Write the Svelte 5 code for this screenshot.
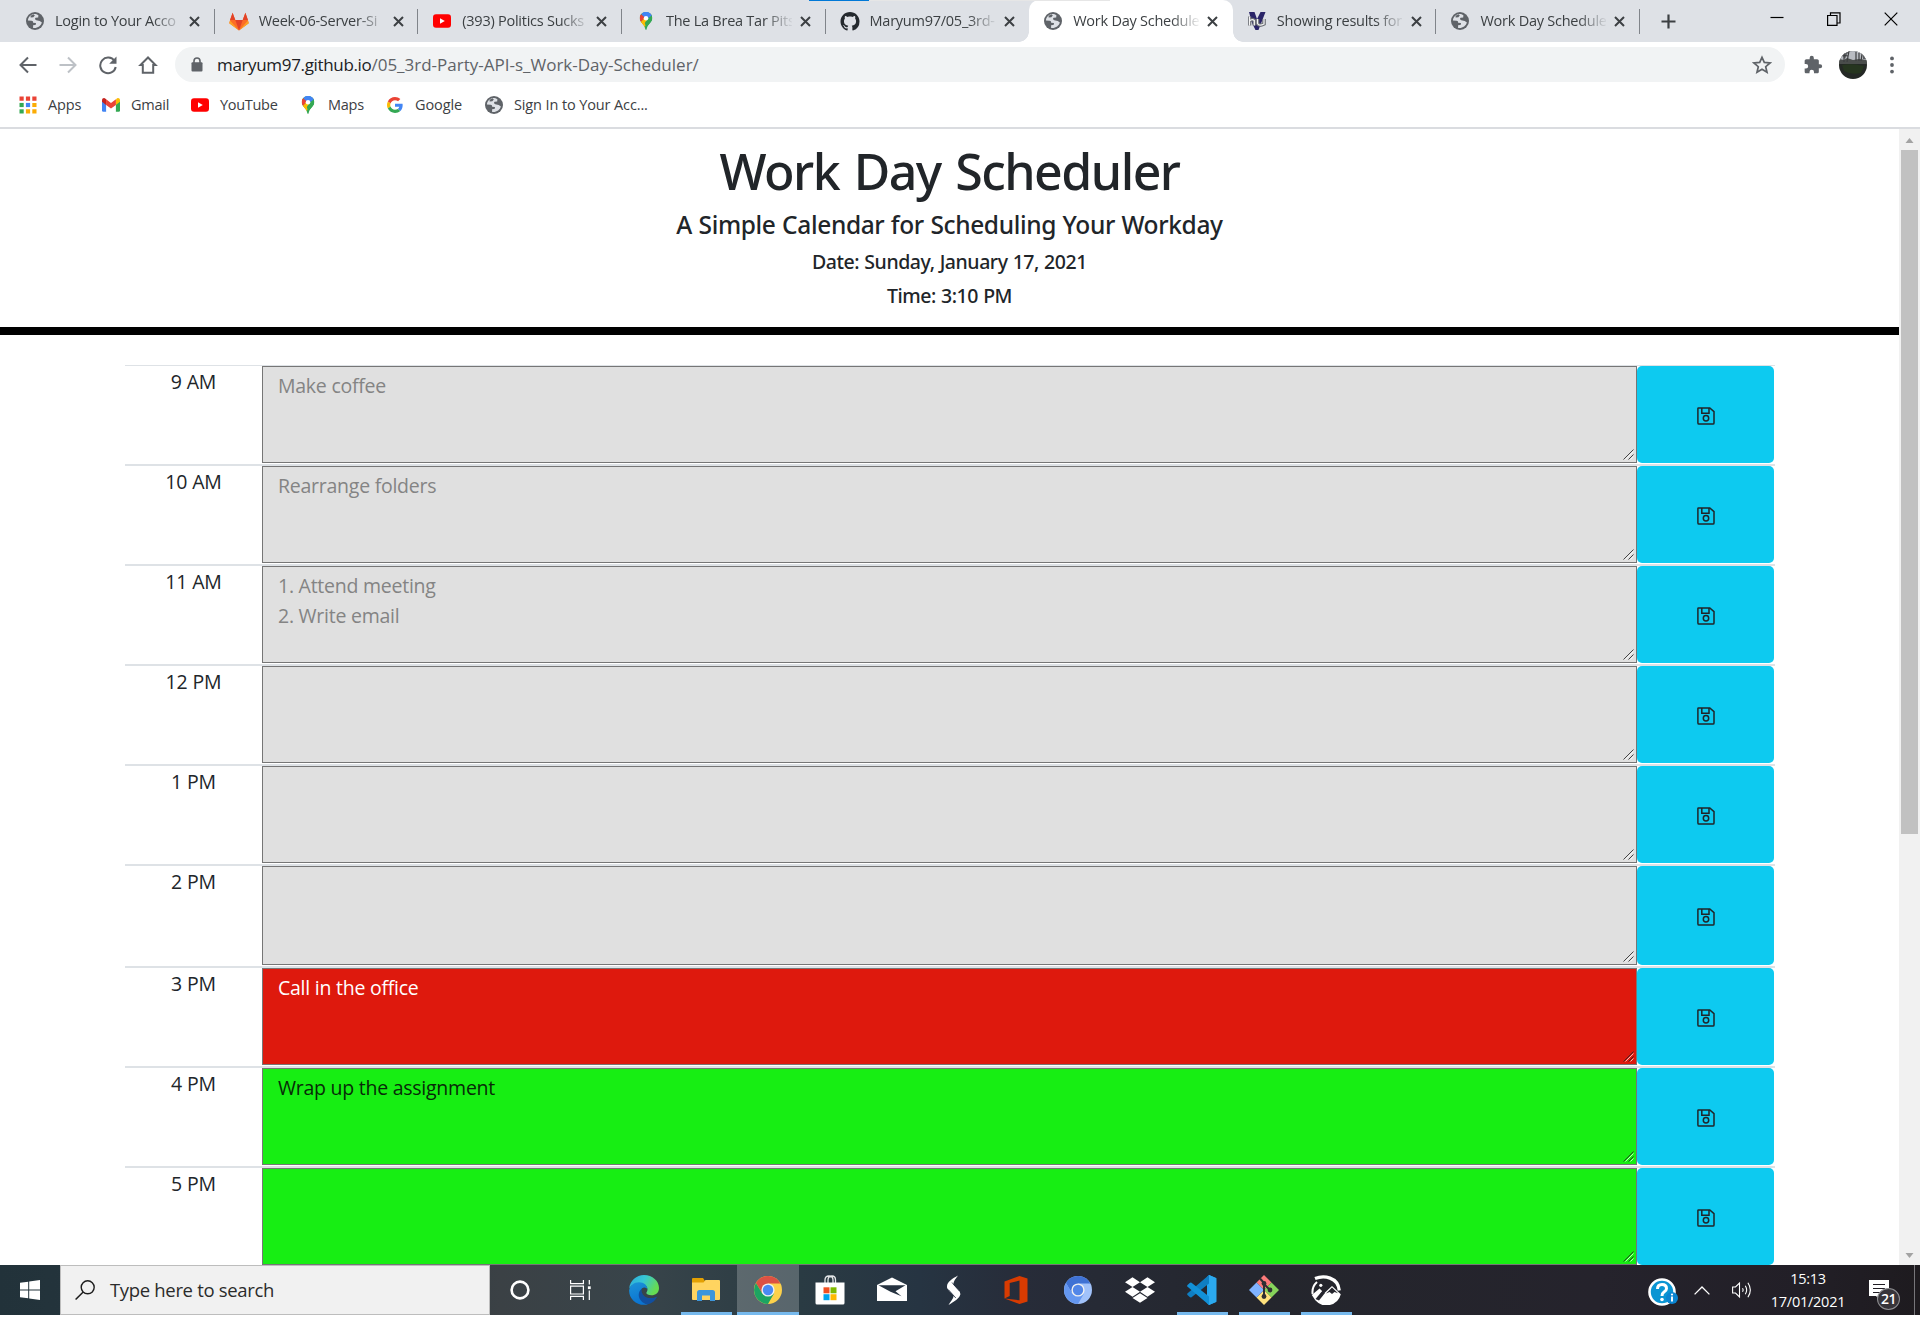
<script>
  const tabs = [
    { icon: 'globe', title: 'Login to Your Acco' },
    { icon: 'gitlab', title: 'Week-06-Server-Si' },
    { icon: 'youtube', title: '(393) Politics Sucks' },
    { icon: 'maps', title: 'The La Brea Tar Pits' },
    { icon: 'github', title: 'Maryum97/05_3rd-' },
    { icon: 'globe', title: 'Work Day Schedule', active: true },
    { icon: 'hv', title: 'Showing results for' },
    { icon: 'globe', title: 'Work Day Schedule' }
  ];

  const bookmarks = [
    { icon: 'apps', label: 'Apps', cls: 'b-apps' },
    { icon: 'gmail', label: 'Gmail', cls: 'b-gmail' },
    { icon: 'youtube', label: 'YouTube', cls: 'b-youtube' },
    { icon: 'maps', label: 'Maps', cls: 'b-maps' },
    { icon: 'google', label: 'Google', cls: 'b-google' },
    { icon: 'globe', label: 'Sign In to Your Acc...', cls: 'b-signin' }
  ];

  const hours = [
    { label: '9 AM', text: 'Make coffee', state: 'past' },
    { label: '10 AM', text: 'Rearrange folders', state: 'past' },
    { label: '11 AM', text: '1. Attend meeting\n2. Write email', state: 'past' },
    { label: '12 PM', text: '', state: 'past' },
    { label: '1 PM', text: '', state: 'past' },
    { label: '2 PM', text: '', state: 'past', tall: true },
    { label: '3 PM', text: 'Call in the office', state: 'present' },
    { label: '4 PM', text: 'Wrap up the assignment', state: 'future' },
    { label: '5 PM', text: '', state: 'future' }
  ];

  const apps = [
    { icon: 'edge' },
    { icon: 'explorer', open: true },
    { icon: 'chrome', focused: true },
    { icon: 'store' },
    { icon: 'mail' },
    { icon: 'swift' },
    { icon: 'office' },
    { icon: 'chromium' },
    { icon: 'dropbox' },
    { icon: 'vscode', open: true },
    { icon: 'git', open: true },
    { icon: 'gyazo', open: true }
  ];
</script>

{#snippet favicon(name)}
  {#if name === 'globe'}
    <svg class="fav" viewBox="0 0 18 18">
      <circle cx="9" cy="9" r="9" fill="#5f6368" />
      <path d="M8 1.9C4.6 2.4 2 5.300 1.900 8.600L5.600 8.800C6.800 9 7.200 9.600 7.100 10.700L9.700 10.900C10.300 11.200 10.200 12.600 9 13L7.100 13.300V15.900C11 16.700 14.900 14 15.900 10.500L13.700 8.900L10.300 8.200C8.900 7.700 8.700 6.300 9.600 5.700L12.200 5.500L12.400 3.300C11.200 2.300 9.600 1.800 8 1.900Z" fill="#dee1e6" />
      <path d="M4.600 5.600L7.400 5.300L8.800 3.400L7.600 2.300L4.600 3.800Z" fill="#5f6368" />
    </svg>
  {:else if name === 'gitlab'}
    <svg class="fav wide" viewBox="0 0 20 18">
      <path d="M10 18L.3 10.700 1 8 3.600.2 6.300 7.400H13.700L16.400.2 19 8 19.700 10.700Z" fill="#fc6d26" />
      <path d="M10 18L6.300 7.400H13.700Z" fill="#e24329" />
      <path d="M10 18L1 8 .2 10.800ZM10 18L19 8 19.800 10.800Z" fill="#fca326" />
      <path d="M3.600.2L1 7.600H6.300ZM16.400.2L13.700 7.600H19Z" fill="#e24329" />
    </svg>
  {:else if name === 'youtube'}
    <svg class="fav" viewBox="0 0 18 18">
      <rect y="2.300" width="18" height="13.500" rx="3" fill="#f00" />
      <path d="M7 6.300L11.800 9 7 11.800Z" fill="#fff" />
    </svg>
  {:else if name === 'maps'}
    <svg class="fav" viewBox="0 0 18 20">
      <clipPath id="pin"><path d="M9 0C13 0 16 3 16 6.900C16 11.500 10.400 13.600 9.700 19.300Q9 20.600 8.300 19.300C7.600 13.600 2 11.500 2 6.900C2 3 5 0 9 0Z" /></clipPath>
      <g clip-path="url(#pin)">
        <rect width="18" height="20" fill="#34a853" />
        <path d="M0 14L16 0H18V5L6 18Z" fill="#fbbc04" />
        <path d="M5 0H18L16.500 4 9 9.500 4 4Z" fill="#4285f4" />
        <path d="M16 2L18 8 9 17 7 10Z" fill="#34a853" />
        <path d="M0 0L3 2 8 6.500 3 12 0 9Z" fill="#ea4335" />
        <path d="M3 11.700L7.500 6.500 10 9 6 14.500Z" fill="#fbbc04" />
        <path d="M4 2L9-1 17 3 11 7 8 6Z" fill="#4285f4" />
      </g>
      <circle cx="9" cy="6.900" r="2.500" fill="#fff" />
    </svg>
  {:else if name === 'github'}
    <svg class="fav wide" viewBox="0 0 16 16">
      <path fill="#24292e" d="M8 0C3.580 0 0 3.580 0 8c0 3.540 2.290 6.530 5.470 7.590.4.070.55-.17.55-.38 0-.19-.01-.82-.01-1.490-2.010.37-2.530-.49-2.690-.94-.09-.23-.48-.94-.82-1.130-.28-.15-.68-.52-.01-.53.63-.01 1.080.58 1.230.82.72 1.210 1.870.87 2.330.66.070-.52.28-.87.51-1.070-1.780-.2-3.640-.89-3.640-3.950 0-.87.31-1.590.82-2.150-.08-.2-.36-1.020.08-2.120 0 0 .67-.21 2.200.82.64-.18 1.320-.27 2-.27s1.360.09 2 .27c1.530-1.040 2.200-.82 2.200-.82.44 1.100.16 1.920.08 2.120.51.56.82 1.270.82 2.150 0 3.070-1.870 3.750-3.650 3.950.29.25.54.73.54 1.480 0 1.070-.01 1.930-.01 2.200 0 .21.15.46.55.38A8.010 8.010 0 0 0 16 8c0-4.420-3.580-8-8-8Z" />
    </svg>
  {:else if name === 'hv'}
    <svg class="fav" viewBox="0 0 18 18">
      <path d="M1 0H6.500L9 7 12.500 0H17.500L10.500 18H7.500L4 11Z" fill="#2a2468" />
      <path d="M1.500 4.500V13.500M1.500 9Q4 6.500 6.300 8.500V13.500M9.500 7V11.500Q11 14.500 16 12V7" fill="none" stroke="#6a6d74" stroke-width="3.600" />
      <path d="M1.500 4.500V13.500M1.500 9Q4 6.500 6.300 8.500V13.500M9.500 7V11.500Q11 14.500 16 12V7" fill="none" stroke="#f4f4f4" stroke-width="1.300" />
    </svg>
  {:else if name === 'apps'}
    <svg class="fav" viewBox="0 0 18 18">
      <path d="M.5.500h4.200v4.200H.5zM6.900.500h4.200v4.200H6.900zM13.300.500h4.200v4.200h-4.200z" fill="#ea4335" />
      <path d="M.5 6.900h4.200v4.200H.5z" fill="#34a853" />
      <path d="M6.900 6.900h4.200v4.200H6.900z" fill="#4285f4" />
      <path d="M13.300 6.900h4.200v4.200h-4.200zM6.900 13.300h4.200v4.200H6.900zM13.300 13.300h4.200v4.200h-4.200z" fill="#fbac05" />
      <path d="M.5 13.300h4.200v4.200H.5z" fill="#34a853" />
    </svg>
  {:else if name === 'gmail'}
    <svg class="fav" viewBox="0 0 18 18">
      <path d="M0 4.500V14.500Q0 15.700 1.300 15.700H4.100V8Z" fill="#4285f4" />
      <path d="M18 4.500V14.500Q18 15.700 16.700 15.700H13.900V8Z" fill="#34a853" />
      <path d="M13.900 4V8.900L18 5.800V4.200C18 2.200 15.800 1.500 14.500 2.700Z" fill="#fbbc04" />
      <path d="M4.100 8.900V3.300L9 7 13.900 3.300V8.900L9 12.600Z" fill="#ea4335" />
      <path d="M0 4.200V5.800L4.100 8.900V3.300L3.500 2.700C2.200 1.500 0 2.200 0 4.200Z" fill="#c5221f" />
    </svg>
  {:else if name === 'google'}
    <svg class="fav" viewBox="-3 -3 54 54">
      <path fill="#EA4335" d="M24 9.500c3.540 0 6.710 1.220 9.210 3.600l6.850-6.850C35.900 2.380 30.470 0 24 0 14.620 0 6.510 5.380 2.560 13.220l7.980 6.190C12.430 13.720 17.740 9.500 24 9.500z" />
      <path fill="#4285F4" d="M46.980 24.550c0-1.570-.15-3.090-.38-4.550H24v9.020h12.940c-.58 2.960-2.260 5.480-4.780 7.180l7.730 6c4.510-4.180 7.090-10.360 7.090-17.650z" />
      <path fill="#FBBC05" d="M10.530 28.590c-.48-1.450-.76-2.990-.76-4.590s.27-3.140.76-4.590l-7.980-6.190C.92 16.460 0 20.120 0 24c0 3.880.92 7.540 2.560 10.780l7.970-6.190z" />
      <path fill="#34A853" d="M24 48c6.480 0 11.930-2.130 15.890-5.810l-7.730-6c-2.150 1.450-4.920 2.300-8.160 2.300-6.260 0-11.570-4.220-13.470-9.910l-7.980 6.190C6.510 42.620 14.620 48 24 48z" />
    </svg>
  {/if}
{/snippet}

{#snippet appIcon(name)}
  <svg class="app-icon" viewBox="0 0 30 30">
    {#if name === 'edge'}
      <defs>
        <linearGradient id="eTop" x1="0" y1="0" x2="1" y2=".4"><stop offset="0" stop-color="#2aa9dc" /><stop offset=".5" stop-color="#37c6d5" /><stop offset="1" stop-color="#66dc52" /></linearGradient>
        <linearGradient id="eMid" x1="0" y1="0" x2=".3" y2="1"><stop offset="0" stop-color="#1c93d8" /><stop offset="1" stop-color="#0b74d1" /></linearGradient>
      </defs>
      <path d="M.2 13.500C1 5.500 7.500 0 15 0C23.500 0 30 6 30 13C30 17.800 26.500 20.300 22.500 20.300C19.500 20.300 17.300 19.200 17.300 18C17.300 17.200 18.500 16.600 18.500 14.500C18.500 11 15 8.500 10 8.500C5 8.500 2 10.500.2 13.500Z" fill="url(#eTop)" />
      <path d="M.1 15.500C.8 10.500 5 7.300 10 7.300C15.200 7.300 18.500 10.500 18.500 14.500C18.500 13 13 10 11.500 16.500C10 23 15 29 19.500 29.300C9 32 0 24.500.1 15.500Z" fill="url(#eMid)" />
      <path d="M12.700 13.700C9 16.500 9 21.500 11.500 25C14 28.600 18 29.600 20 29C24 27.600 26.500 25 27.700 22.500C28 21.800 27.500 21.500 26.900 21.900C19.500 25.300 11.500 21 12.700 13.700Z" fill="#124f9f" />
    {:else if name === 'explorer'}
      <path d="M1 4Q1 3 2 3H12L14 6V8H1Z" fill="#e3a002" />
      <path d="M1 7.500H12.500L14.500 5H28Q29 5 29 6V24Q29 25 28 25H2Q1 25 1 24Z" fill="#ffd460" />
      <path d="M6 26V17.500Q6 15 8.500 15H21.500Q24 15 24 17.500V26H19V20.500H11V26Z" fill="#3d96db" />
    {:else if name === 'chrome'}
      <circle cx="15" cy="15" r="14" fill="#fdd14b" />
      <path d="M15 15V8.500H27.400A14 14 0 0 0 2.900 8L9.300 18.500Z" fill="#dd5144" />
      <path d="M15 15L9.300 18.400 2.900 8A14 14 0 0 0 15 29L21 18.500Z" fill="#1da462" />
      <circle cx="15" cy="15" r="6.600" fill="#f1f1f1" /><circle cx="15" cy="15" r="5.200" fill="#4a8af4" />
    {:else if name === 'store'}
      <path d="M10 8V5Q10 1 14 1Q18 1 18 5V8M13 8V5Q13 1 17 1Q20.500 1 20.500 5V8" fill="none" stroke="#e3e6e8" stroke-width="1.300" />
      <path d="M.5 7.500H29.500V28Q29.500 29.500 28 29.500H2Q.5 29.500.5 28Z" fill="#fff" />
      <path d="M8.500 12.300h6v6h-6z" fill="#f25022" /><path d="M15.500 12.300h6v6h-6z" fill="#7fba00" /><path d="M8.500 19.200h6v6h-6z" fill="#00a4ef" /><path d="M15.500 19.200h6v6h-6z" fill="#ffb900" />
    {:else if name === 'mail'}
      <path d="M0 10L15 2.500 30 10V26H0Z" fill="#fff" />
      <path d="M1.500 10.300H28.500L18.500 16.300 24.500 21.300 13.500 16.800Z" fill="#263340" />
    {:else if name === 'swift'}
      <path d="M19 .5C13.500 3.500 8 7 8 11.500C8 15 11.500 16 16.300 22L21.300 19.500C20.800 14.500 16.800 13 14.300 9.500C14.500 6 16.800 3.500 19 .5Z" fill="#fff" />
      <path d="M9.500 30C15.500 26.500 21 23 21.300 19C21.300 15.500 16.300 14 12.300 8.500L8.300 11C8.300 15 12.300 17.500 14.800 20.500C14.300 24 11.500 26.500 9.500 30Z" fill="#fff" />
      <path d="M9.300 14.500L16.800 23M13 7.500L20.300 16" stroke="#263042" stroke-width=".8" />
    {:else if name === 'office'}
      <path d="M3.500 6.500L18.500 1 26.500 3.500V26.500L18.500 29 3.500 23.500 18.500 25.300V5.500L8.700 8V21L3.500 23.500Z" fill="#d83b01" />
    {:else if name === 'chromium'}
      <circle cx="15" cy="15" r="14" fill="#a1c2fa" />
      <path d="M15 15V8.500H27.400A14 14 0 0 0 2.900 8L9.300 18.500Z" fill="#3f72d4" />
      <path d="M15 15L9.300 18.400 2.900 8A14 14 0 0 0 15 29L21 18.500Z" fill="#6497f0" />
      <circle cx="15" cy="15" r="6.600" fill="#f1f1f1" /><circle cx="15" cy="15" r="5.200" fill="#5287e8" />
    {:else if name === 'dropbox'}
      <path d="M7.500 2.300L15 7.200 7.500 12 0 7.200ZM22.500 2.300L30 7.200 22.500 12 15 7.200ZM7.500 12L15 16.800 7.500 21.700 0 16.800ZM22.500 12L30 16.800 22.500 21.700 15 16.800ZM15 18.300L22.500 23 15 27.800 7.500 23Z" fill="#fff" />
    {:else if name === 'vscode'}
      <path d="M22 0L29 3V27L22 30 20 28V2Z" fill="#23a8f2" />
      <path d="M22 0V8.500L4.500 22.300Q3.500 22.800 2.700 22L.5 20Q-.3 19 .6 18.200Z" fill="#0f7ec2" />
      <path d="M22 30V21.500L4.500 7.700Q3.500 7.200 2.700 8L.5 10Q-.3 11 .6 11.800Z" fill="#1291d8" />
      <path d="M22 0L29.500 3.300V26.700L22 30Z" fill="#2ba9ee" />
    {:else if name === 'git'}
      <path d="M15 0L22.500 7.500 15 15 7.500 7.500Z" fill="#fc7a7a" /><path d="M22.500 7.500L30 15 22.500 22.500 15 15Z" fill="#86d35a" /><path d="M15 15L22.500 22.500 15 30 7.500 22.500Z" fill="#ffe27d" /><path d="M7.500 7.500L15 15 7.500 22.500 0 15Z" fill="#80b3ff" />
      <path d="M11 3.500L15 8V22M15 9L21 15" stroke="#2f2f33" stroke-width="2" fill="none" />
      <circle cx="15" cy="8.500" r="2.400" fill="#2f2f33" /><circle cx="21" cy="15" r="2.400" fill="#2f2f33" /><circle cx="15" cy="21.500" r="2.400" fill="#2f2f33" />
    {:else if name === 'gyazo'}
      <path d="M4 3.500C13 0 27 2 28.300 15.500" fill="none" stroke="#fff" stroke-width="3.200" />
      <path d="M1.600 19A13.700 13.700 0 0 1 6 7" fill="none" stroke="#fff" stroke-width="2" />
      <path d="M.8 20L8.500 13.500 11.300 16.300 5.500 24.500 14 17.500 21 11 29.800 19.300A14.800 14.800 0 0 1 4.300 25.300Z" fill="#fff" />
      <path d="M4.500 24L11.500 15.800 14 18 8 25.500Z" fill="#25262e" />
      <path d="M15 18.500L21 12.500 27 18.300 23.500 17 21 19 18.500 17Z" fill="#25262e" />
      <circle cx="9.800" cy="10.300" r="1.600" fill="#fff" />
    {/if}
  </svg>
{/snippet}

<div class="screen">
  <div class="tab-strip">
    <div class="load-line"></div>
    {#each tabs as tab, i}
      <div class="tab" class:active={tab.active} class:before-active={tabs[i + 1]?.active}>
        <span class="tab-icon">{@render favicon(tab.icon)}</span>
        <span class="tab-title">{tab.title}</span>
        <svg class="tab-close" viewBox="0 0 11 11"><path d="M1 1L10 10M10 1L1 10" stroke="#3c4043" stroke-width="2" /></svg>
      </div>
    {/each}
    <svg class="new-tab" viewBox="0 0 15 15"><path d="M7.500.500V14.500M.5 7.500H14.500" stroke="#3c4043" stroke-width="2.200" /></svg>
    <div class="window-controls">
      <svg viewBox="0 0 14 14"><path d="M.5 5.500H13.500" stroke="#000" stroke-width="1.200" /></svg>
      <svg viewBox="0 0 14 14"><path d="M.6 3.500H10V13.400H.6ZM3.500 3.500V.8H13V11H10" fill="none" stroke="#000" stroke-width="1.200" /></svg>
      <svg viewBox="0 0 14 14"><path d="M.7.700L13.300 13.300M13.300.7L.7 13.300" stroke="#000" stroke-width="1.200" /></svg>
    </div>
  </div>

  <div class="toolbar">
    <div class="nav">
      <svg viewBox="0 0 20 20"><path d="M18.500 10H3M10 2.500L2.500 10 10 17.500" fill="none" stroke="#5f6368" stroke-width="2" /></svg>
      <svg viewBox="0 0 20 20"><path d="M1.500 10H17M10 2.500L17.500 10 10 17.500" fill="none" stroke="#bdc1c6" stroke-width="2" /></svg>
      <svg viewBox="0 0 20 20"><path d="M16.500 6A7.800 7.800 0 1 0 17.700 12" fill="none" stroke="#5f6368" stroke-width="2" /><path d="M18.500 1.500V8.800H11.200Z" fill="#5f6368" /></svg>
      <svg viewBox="0 0 20 20"><path d="M10 2.500L2.500 10H4.800V17.800H15.200V10H17.500Z" fill="none" stroke="#5f6368" stroke-width="2" /></svg>
    </div>
    <div class="omnibox">
      <svg class="lock" viewBox="0 0 12 15"><path d="M3 6V4Q3 1 6 1Q9 1 9 4V6" fill="none" stroke="#5f6368" stroke-width="1.600" /><rect x=".5" y="5.200" width="11" height="9.300" rx="1" fill="#5f6368" /></svg>
      <span class="url"><span class="host">maryum97.github.io</span>/05_3rd-Party-API-s_Work-Day-Scheduler/</span>
      <svg class="star" viewBox="0 0 20 20"><path d="M10 2.300L12.300 7.400 18 8 13.700 11.700 15 17.200 10 14.300 5 17.200 6.300 11.700 2 8 7.700 7.400Z" fill="none" stroke="#5f6368" stroke-width="1.700" /></svg>
    </div>
    <svg class="puzzle" viewBox="0 0 24 24"><path fill="#5f6368" d="M20.500 11H19V7c0-1.100-.9-2-2-2h-4V3.500a2.500 2.500 0 0 0-5 0V5H4c-1.100 0-2 .9-2 2v3.800h1.500a2.700 2.700 0 0 1 0 5.400H2V20c0 1.100.9 2 2 2h3.800v-1.500a2.700 2.700 0 0 1 5.400 0V22H17c1.100 0 2-.9 2-2v-4h1.500a2.500 2.500 0 0 0 0-5z" /></svg>
    <svg class="avatar" viewBox="0 0 28 28">
      <clipPath id="av"><circle cx="14" cy="14" r="14" /></clipPath>
      <g clip-path="url(#av)">
        <rect width="28" height="28" fill="#242825" />
        <rect width="28" height="9" fill="#b9bcc2" />
        <path d="M0 0H11L8 3 6 8 4 5 0 7ZM28 0H23L24 8H28Z" fill="#5b5d60" />
        <path d="M0 8L5 9 8 7 14 9 20 8 28 9V13H0Z" fill="#4a4d4b" />
        <path d="M5 11V2M8 11L10 0M17 10V1M20 10V2M3 4L9 5M22 10L23 3" stroke="#3d3f40" stroke-width="1.200" />
        <path d="M3 14Q14 12 25 15L22 22Q12 24 5 20Z" fill="#26351f" />
      </g>
    </svg>
    <svg class="dots" viewBox="0 0 4 18"><circle cx="2" cy="2.400" r="1.900" fill="#5f6368" /><circle cx="2" cy="9" r="1.900" fill="#5f6368" /><circle cx="2" cy="15.600" r="1.900" fill="#5f6368" /></svg>
  </div>

  <div class="bookmarks">
    {#each bookmarks as b}
      <div class="bookmark {b.cls}">{@render favicon(b.icon)}<span>{b.label}</span></div>
    {/each}
  </div>

  <div class="viewport">
    <div class="page">
      <header>
        <h1>Work Day Scheduler</h1>
        <h3>A Simple Calendar for Scheduling Your Workday</h3>
        <p>Date: Sunday, January 17, 2021</p>
        <p>Time: 3:10 PM</p>
      </header>
      <main>
        {#each hours as h}
          <div class="row" class:tall={h.tall}>
            <div class="hour">{h.label}</div>
            <div class="entry {h.state}">
              {h.text}
              <svg class="grip" viewBox="0 0 11 11">
                <path class="grip-light" d="M2.500 10.500L10.500 2.500M7.500 10.500L10.500 7.500" />
                <path class="grip-dark" d="M.5 10.500L10.500.5M5.500 10.500L10.500 5.500" />
              </svg>
            </div>
            <button class="save" aria-label="Save">
              <svg viewBox="0 0 18 18" fill="none" stroke="#212529" stroke-width="1.500">
                <path d="M1.500.9H12.800L17 4.600V15.900Q17 17 15.900 17H2Q.9 17 .9 15.900V1.500Q.9.9 1.500.9Z" />
                <path d="M4.800 1V6.200H12V1" />
                <circle cx="9" cy="11.300" r="2.700" />
              </svg>
            </button>
          </div>
        {/each}
      </main>
    </div>
    <div class="scrollbar">
      <svg viewBox="0 0 8 5"><path d="M4 0L8 5H0Z" fill="#a3a3a3" /></svg>
      <div class="thumb"></div>
      <svg class="down" viewBox="0 0 8 5"><path d="M4 5L8 0H0Z" fill="#a3a3a3" /></svg>
    </div>
  </div>

  <div class="taskbar">
    <div class="start">
      <svg viewBox="0 0 20 20"><path d="M0 2.800L8.200 1.700V9.500H0ZM9.200 1.500L20 0V9.500H9.200ZM0 10.500H8.200V18.300L0 17.200ZM9.200 10.500H20V20L9.200 18.500Z" fill="#fff" /></svg>
    </div>
    <div class="search">
      <svg viewBox="0 0 20 20"><circle cx="12.700" cy="7.300" r="6.500" fill="none" stroke="#1d1d1d" stroke-width="1.400" /><path d="M8.200 12L.6 19.500" stroke="#1d1d1d" stroke-width="1.500" /></svg>
      <span>Type here to search</span>
    </div>
    <div class="cell cortana"><svg viewBox="0 0 20 20"><circle cx="10" cy="10" r="8.400" fill="none" stroke="#fff" stroke-width="2.600" /></svg></div>
    <div class="cell task-view">
      <svg viewBox="0 0 21 20" fill="none" stroke="#fff" stroke-width="1.200">
        <path d="M.6 0V3.600H13.400V0M.6 20V16.400H13.400V20M.6 6.200H13.400V14H.6ZM19.300 0V4.500M19.300 10.500V20" />
        <rect x="17.900" y="6.300" width="2.800" height="2.800" fill="#fff" stroke="none" />
      </svg>
    </div>
    {#each apps as a}
      <div class="cell" class:open={a.open} class:focused={a.focused}>{@render appIcon(a.icon)}</div>
    {/each}
    <div class="tray">
      <svg class="help" viewBox="0 0 30 28">
        <circle cx="14" cy="14" r="12.500" fill="#0a95d3" stroke="#fff" stroke-width="2.600" />
        <path d="M9.500 11Q9.500 6.500 14 6.500Q18.500 6.500 18.500 10.500Q18.500 12.500 16 14Q14 15.300 14 18" fill="none" stroke="#fff" stroke-width="3" />
        <circle cx="14" cy="21.500" r="1.800" fill="#fff" />
        <circle cx="24" cy="20" r="6" fill="#0a84d0" />
        <path d="M24 18.600V23.500" stroke="#fff" stroke-width="1.900" /><circle cx="24" cy="16.500" r="1.100" fill="#fff" />
      </svg>
      <svg class="chevron" viewBox="0 0 16 9"><path d="M.6 8.400L8 1 15.400 8.400" fill="none" stroke="#fff" stroke-width="1.300" /></svg>
      <svg class="speaker" viewBox="0 0 20 18" fill="none" stroke="#fff" stroke-width="1.100">
        <path d="M.6 6H3.500L7.500 2V16L3.500 12H.6Z" />
        <path d="M10.500 7.200Q11.700 9 10.500 10.800M13.300 4.700Q16 9 13.300 13.300M15.900 1.800Q20.800 9 15.900 16.200" />
      </svg>
      <div class="clock"><span>15:13</span><span>17/01/2021</span></div>
      <div class="notify">
        <svg viewBox="0 0 20 21"><path d="M0 0H20V16H12V21L7 16H0Z" fill="#fff" /><path d="M4 4.500H16M4 8.500H16M4 12.500H12" stroke="#201d24" stroke-width="1.200" /></svg>
        <span class="badge">21</span>
      </div>
      <div class="peek"></div>
    </div>
  </div>
</div>

<style>
  :global(body) { background: #fff; overflow: hidden; }
  .screen {
    width: 1920px;
    height: 1315px;
    display: flex;
    flex-direction: column;
    font-family: "Open Sans", "Noto Sans", sans-serif;
    overflow: hidden;
  }
  svg { display: block; flex: none; }

  .tab-strip {
    position: relative;
    height: 42px;
    flex: none;
    display: flex;
    align-items: center;
    background: #dee1e6;
    padding-left: 11px;
  }
  .load-line {
    position: absolute;
    left: 809px;
    top: 0;
    width: 301px;
    height: 1px;
    background: linear-gradient(90deg, #0078d7 60px, #e6e6e6 60px);
    z-index: 2;
  }
  .tab {
    position: relative;
    box-sizing: border-box;
    width: 203.650px;
    height: 42px;
    flex: none;
    display: flex;
    align-items: center;
    padding-left: 14px;
  }
  .tab::after {
    content: "";
    position: absolute;
    right: 0;
    top: 9px;
    width: 1px;
    height: 25px;
    background: #80848a;
  }
  .tab.active { background: #fff; border-radius: 10px 10px 0 0; }
  .tab.active::before {
    content: "";
    position: absolute;
    left: -10px;
    bottom: 0;
    width: 10px;
    height: 10px;
    background: radial-gradient(circle at 0 0, transparent 9.500px, #fff 10px);
  }
  .tab.active::after {
    right: -10px;
    top: auto;
    bottom: 0;
    width: 10px;
    height: 10px;
    background: radial-gradient(circle at 100% 0, transparent 9.500px, #fff 10px);
  }
  .tab.before-active::after { display: none; }
  .tab-icon { width: 20px; flex: none; display: flex; justify-content: center; }
  .fav { width: 18px; height: 18px; }
  .fav.wide { width: 20px; height: 19px; }
  .tab-title {
    width: 126px;
    margin-left: 10px;
    white-space: nowrap;
    font-size: 14.500px;
    letter-spacing: -.25px;
    line-height: 40px;
    color: #3c4043;
    -webkit-mask-image: linear-gradient(90deg, #000 98px, transparent 128px);
    mask-image: linear-gradient(90deg, #000 98px, transparent 128px);
  }
  .tab-close { width: 11px; height: 11px; margin-left: 8px; }
  .new-tab { width: 15px; height: 15px; margin-left: 21px; }
  .window-controls {
    display: flex;
    gap: 43px;
    margin-left: auto;
    padding-right: 22px;
    padding-bottom: 5px;
  }
  .window-controls svg { width: 14px; height: 14px; }

  .toolbar {
    height: 45px;
    flex: none;
    display: flex;
    align-items: center;
    padding-left: 17.500px;
    box-sizing: border-box;
  }
  .nav { display: flex; gap: 20px; width: 157.500px; flex: none; }
  .nav svg { width: 20px; height: 20px; }
  .omnibox {
    box-sizing: border-box;
    width: 1610px;
    height: 35px;
    border-radius: 18px;
    background: #f1f3f4;
    display: flex;
    align-items: center;
    padding: 0 13px 0 16px;
  }
  .lock { width: 12px; height: 15px; }
  .url {
    margin-left: 14px;
    font-size: 17px;
    line-height: 35px;
    color: #5f6368;
    white-space: nowrap;
  }
  .host { color: #202124; letter-spacing: -.34px; }
  .star { width: 20px; height: 20px; margin-left: auto; }
  .puzzle { width: 20px; height: 20px; margin-left: 18px; }
  .avatar { width: 28px; height: 28px; margin-left: 16px; }
  .dots { width: 4px; height: 18px; margin-left: 23px; }

  .bookmarks {
    box-sizing: border-box;
    height: 42px;
    flex: none;
    display: flex;
    align-items: center;
    padding: 0 0 4px 19px;
    border-bottom: 2px solid #dadce0;
  }
  .bookmark {
    display: flex;
    align-items: center;
    gap: 11px;
    flex: none;
    box-sizing: border-box;
    font-size: 14.500px;
    letter-spacing: -.12px;
    line-height: 30px;
    color: #3c4043;
    white-space: nowrap;
  }
  .b-apps { width: 83px; }
  .b-gmail { width: 89px; letter-spacing: -.25px; }
  .b-youtube { width: 108px; letter-spacing: -.3px; }
  .b-maps { width: 87px; letter-spacing: -.25px; }
  .b-google { width: 99px; }

  .viewport { flex: 1; min-height: 0; display: flex; }
  .page { width: 1899px; overflow: hidden; background: #fff; }
  header {
    box-sizing: border-box;
    height: 206px;
    padding-top: 12px;
    border-bottom: 8px solid #000;
    text-align: center;
    color: #212529;
    font-family: "Noto Sans", "Open Sans", sans-serif;
    font-weight: 500;
  }
  h1 { margin: 0; font-size: 50px; line-height: 60px; font-weight: 500; letter-spacing: -1.500px; word-spacing: 3px; }
  h3 { margin: 9px 0 10px; font-size: 24.500px; line-height: 30px; font-weight: 500; letter-spacing: -.36px; word-spacing: .5px; }
  header p { margin: 0 0 10px; font-size: 19.500px; line-height: 24px; letter-spacing: -.44px; word-spacing: .5px; }

  main { width: 1650px; margin: 30px 0 0 125px; border-top: 1px solid #dee2e6; }
  .row {
    box-sizing: border-box;
    height: 100px;
    display: flex;
    border-bottom: 2px solid #dee2e6;
    padding-bottom: 1px;
  }
  .row.tall { height: 102px; }
  .hour {
    width: 137px;
    text-align: center;
    font-size: 19.500px;
    letter-spacing: -.15px;
    line-height: 31px;
    color: #212529;
  }
  .entry {
    position: relative;
    box-sizing: border-box;
    width: 1375px;
    border: 1px solid #767676;
    padding: 4px 15px;
    font-size: 19.500px;
    letter-spacing: -.25px;
    line-height: 30px;
    white-space: pre-line;
  }
  .past { background: #e0e0e0; color: #848484; }
  .present { background: #de190d; color: #fff; }
  .future { background: #17ee13; color: #082a08; }
  .grip { position: absolute; right: 2px; bottom: 2px; width: 11px; height: 11px; }
  .grip path { fill: none; stroke-width: 1; }
  .grip-dark { stroke: rgba(40, 40, 40, .85); }
  .grip-light { stroke: rgba(255, 255, 255, .7); }
  .save {
    width: 137px;
    border: 0;
    padding: 2px 0 0;
    border-radius: 5px;
    background: #0dcaf0;
    display: flex;
    align-items: center;
    justify-content: center;
  }
  .save svg { width: 18px; height: 18px; }

  .scrollbar {
    width: 21px;
    background: #f1f1f1;
    display: flex;
    flex-direction: column;
    align-items: center;
    box-sizing: border-box;
    padding: 9px 0 7px;
  }
  .scrollbar svg { width: 9px; height: 5px; }
  .thumb { width: 17px; height: 684px; margin-top: 7px; background: #c1c1c1; }
  .scrollbar .down { margin-top: auto; }

  .taskbar {
    height: 50px;
    flex: none;
    display: flex;
    background: linear-gradient(90deg, #22323a 0, #283840 300px, #3b4145 500px, #38444a 640px, #2a3b43 800px, #263442 920px, #272c39 1020px, #24262d 1250px, #25232c 1600px, #221f27 1800px, #1e1b1f 1920px);
  }
  .start { width: 60px; display: flex; align-items: center; justify-content: center; }
  .start svg { width: 20px; height: 20px; }
  .search {
    box-sizing: border-box;
    width: 430px;
    border: 1px solid #bdbdbd;
    background: #f1f1f1;
    display: flex;
    align-items: center;
    padding-left: 14px;
    color: #2b2b2b;
    font-size: 18.500px;
    letter-spacing: -.33px;
    line-height: 46px;
  }
  .search svg { width: 20px; height: 20px; margin-right: 15px; }
  .cell {
    box-sizing: border-box;
    width: 62px;
    height: 50px;
    display: flex;
    justify-content: center;
    align-items: center;
  }
  .cortana { width: 60px; }
  .cortana svg { width: 20px; height: 20px; }
  .task-view { width: 63px; }
  .task-view svg { width: 21px; height: 20px; margin-right: 3px; }
  .app-icon { width: 30px; height: 30px; }
  .open { background: linear-gradient(#76b9ed, #76b9ed) center bottom / 51px 3px no-repeat; }
  .focused { background: linear-gradient(#76b9ed, #76b9ed) center bottom / 62px 3px no-repeat, rgba(255, 255, 255, .22); }

  .tray { margin-left: auto; display: flex; align-items: center; color: #fff; }
  .help { width: 30px; height: 28px; margin: 3px 16px 0 0; }
  .chevron { width: 16px; height: 9px; margin-right: 22px; }
  .speaker { width: 20px; height: 18px; margin-right: 18px; }
  .clock {
    width: 76px;
    margin-right: 23px;
    display: flex;
    flex-direction: column;
    align-items: center;
    font-size: 14.500px;
    letter-spacing: -.25px;
    line-height: 23.500px;
    white-space: nowrap;
  }
  .notify { position: relative; width: 32px; height: 50px; }
  .notify svg { width: 20px; height: 21px; margin-top: 15px; }
  .badge {
    position: absolute;
    left: 8px;
    top: 23px;
    box-sizing: border-box;
    width: 23px;
    height: 22px;
    border: 1px solid #8f8f92;
    border-radius: 50%;
    background: #37353a;
    font-size: 14px;
    font-weight: 600;
    line-height: 20px;
    text-align: center;
    letter-spacing: -.5px;
  }
  .peek { width: 5px; height: 50px; margin-left: 13px; border-left: 1px solid #77767a; }
</style>
